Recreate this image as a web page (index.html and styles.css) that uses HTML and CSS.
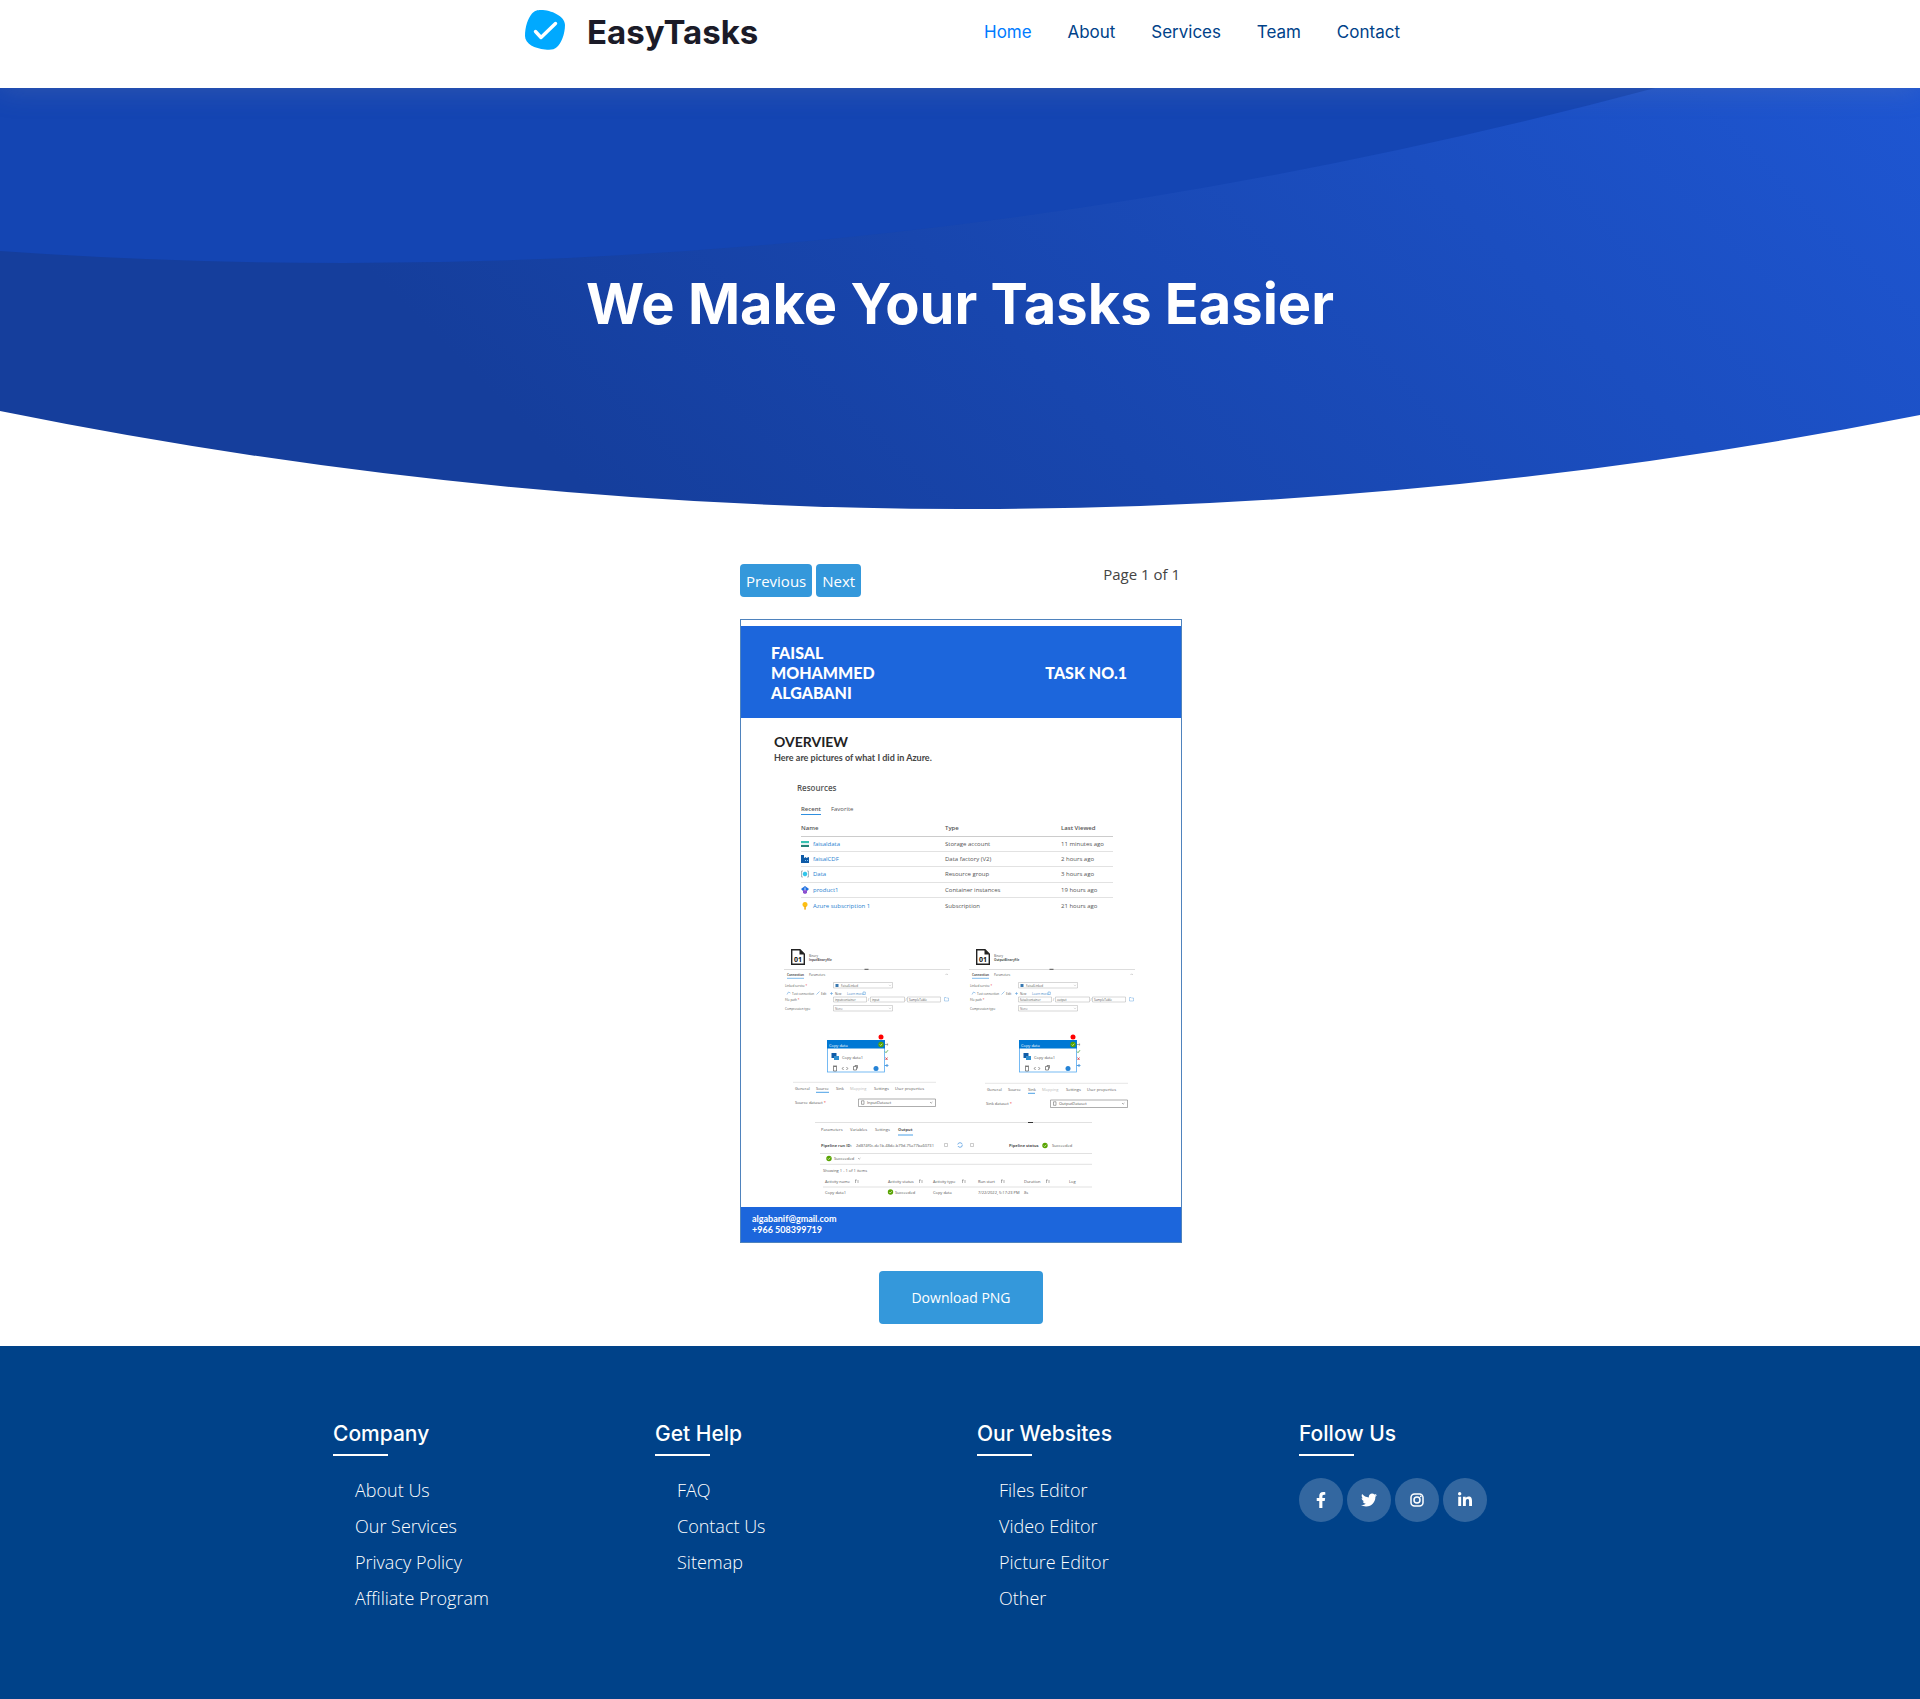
FILE: index.html
```html
<!DOCTYPE html>
<html lang="en">
<head>
<meta charset="utf-8">
<meta name="viewport" content="width=device-width, initial-scale=1">
<title>EasyTasks</title>
<link rel="stylesheet" href="styles.css">
</head>
<body>
<header class="site-header">
  <div class="header-inner">
    <a class="brand" href="#">
      <svg class="brand-mark" viewBox="0 0 40 40" aria-hidden="true">
        <path fill="#00a9ff" d="M16 0C26 0 40 6 40 15C40 24 36 34 32 37C29 40 25 40 20 39.500C10 38.500 0 34 0 26C0 17 3 8 7 3.500C10 .5 12 0 16 0Z"/>
        <path fill="none" stroke="#fff" stroke-width="3.400" stroke-linecap="round" stroke-linejoin="round" d="M10.500 21.500L16 27.500L30.500 13.500"/>
      </svg>
      <span class="brand-name">EasyTasks</span>
    </a>
    <nav class="main-nav" aria-label="Main">
      <a class="nav-link is-active" href="#">Home</a>
      <a class="nav-link" href="#">About</a>
      <a class="nav-link" href="#">Services</a>
      <a class="nav-link" href="#">Team</a>
      <a class="nav-link" href="#">Contact</a>
    </nav>
  </div>
</header>

<section class="hero">
  <svg class="hero-shape" viewBox="0 0 1920 421" preserveAspectRatio="none" aria-hidden="true">
    <defs>
      <linearGradient id="hero-fill" gradientUnits="userSpaceOnUse" x1="480" y1="295" x2="1348" y2="-573">
        <stop offset="0" stop-color="#153e9c"/>
        <stop offset="1" stop-color="#1e56d2"/>
      </linearGradient>
    </defs>
    <path fill="url(#hero-fill)" d="M0 0H1920V327Q960 517 0 323Z"/>
    <path fill="#1445b3" d="M0 0H1655Q827 221 0 163Z"/>
  </svg>
  <h1 class="hero-title">We Make Your Tasks Easier</h1>
</section>

<main class="viewer">
  <div class="viewer-bar">
    <div class="pager">
      <button class="btn btn-small" type="button">Previous</button>
      <button class="btn btn-small" type="button">Next</button>
    </div>
    <span class="page-count">Page 1 of 1</span>
  </div>

  <article class="doc">
    <header class="doc-head">
      <p class="doc-name">FAISAL<br>MOHAMMED<br>ALGABANI</p>
      <p class="doc-task">TASK NO.1</p>
    </header>
    <section class="doc-overview">
      <h2 class="doc-title">OVERVIEW</h2>
      <p class="doc-lead">Here are pictures of what I did in Azure.</p>
    </section>
    <section class="resources">
      <h3 class="res-title">Resources</h3>
      <div class="res-tabs"><span class="res-tab is-current">Recent</span><span class="res-tab">Favorite</span></div>
      <table class="res-table">
        <thead><tr><th class="col-name">Name</th><th class="col-type">Type</th><th>Last Viewed</th></tr></thead>
        <tbody>
          <tr><td><span class="res-item"><svg class="res-icon" viewBox="0 0 8 8"><path fill="#37c2b1" d="M0 1h8v2H0z"/><path fill="#dff3f0" d="M0 3h8v2H0z"/><path fill="#258277" d="M0 5h8v2H0z"/></svg><a href="#">faisaldata</a></span></td><td>Storage account</td><td>11 minutes ago</td></tr>
          <tr><td><span class="res-item"><svg class="res-icon" viewBox="0 0 8 8"><path fill="#0f5ba7" d="M0 0h3v3l2-1v1l3-1v6H0z"/><path fill="#7cc0f4" d="M4 5h1v1H4zM6 5h1v1H6z"/></svg><a href="#">faisalCDF</a></span></td><td>Data factory (V2)</td><td>2 hours ago</td></tr>
          <tr><td><span class="res-item"><svg class="res-icon" viewBox="0 0 8 8"><path fill="none" stroke="#8a9aa6" stroke-width=".7" d="M2 1H.5v6H2M6 1h1.500v6H6"/><path fill="#32c5ea" d="M4 1.500l2.200 1.200v2.600L4 6.500 1.800 5.300V2.700z"/></svg><a href="#">Data</a></span></td><td>Resource group</td><td>3 hours ago</td></tr>
          <tr><td><span class="res-item"><svg class="res-icon" viewBox="0 0 8 8"><path fill="#1f6fe0" d="M4 0l4 3-2 2H2L0 3z"/><path fill="#8a4fd0" d="M2 4h4v3L4 8 2 7z"/><path fill="#fff" d="M3.600 1.500h.8v3h-.8z"/></svg><a href="#">product1</a></span></td><td>Container instances</td><td>19 hours ago</td></tr>
          <tr><td><span class="res-item"><svg class="res-icon" viewBox="0 0 8 8"><circle cx="4" cy="2.500" r="2.500" fill="#fdbf12"/><path fill="#f2a90b" d="M3.300 4h1.500v3.200L4 8l-.7-.8z"/></svg><a href="#">Azure subscription 1</a></span></td><td>Subscription</td><td>21 hours ago</td></tr>
        </tbody>
      </table>
    </section>

    <!-- Azure Data Factory screens: datasets, copy activities, pipeline output -->
    <svg class="doc-screens" viewBox="741 920 440 287" role="img" aria-label="Azure Data Factory screens">
      <defs>
        <g id="dataset">
          <path fill="#fff" stroke="#222" stroke-width="1.400" d="M791.700 949.700h8.300l4.300 4.300v10.300h-12.600z"/>
          <path fill="#222" d="M799.500 949.500v5h5z"/>
          <text x="794" y="961.500" font-size="7" font-weight="700" fill="#111">01</text>
          <text x="809" y="956.500" font-size="3">Binary</text>
          <path stroke="#bbb" stroke-width=".5" d="M784 969.500h166"/>
          <path stroke="#555" stroke-width="1" d="M864.500 969.300h4"/>
          <text x="787" y="975.500" font-size="3" font-weight="700">Connection</text>
          <text x="809" y="975.500" font-size="3">Parameters</text>
          <path stroke="#4aa0e6" stroke-width=".7" d="M787 978.300h17"/>
          <path fill="none" stroke="#888" stroke-width=".4" d="M945.500 975l1.200-1.200 1.200 1.200"/>
          <text x="785" y="987" font-size="3">Linked service <tspan fill="#e33">*</tspan></text>
          <text x="792" y="995" font-size="3">Test connection</text>
          <text x="821" y="995" font-size="3">Edit</text>
          <text x="835" y="995" font-size="3">New</text>
          <text x="847" y="995" font-size="3" fill="#3d7fc4">Learn more</text>
          <path fill="none" stroke="#4a94d8" stroke-width=".5" d="M787 994.500l1.500-2.500 2 1M816.500 994.500l3-3M830 993.500h3M831.500 992v3M863 992h2.300v2.500h-2.300z"/>
          <text x="785" y="1000.500" font-size="3">File path <tspan fill="#e33">*</tspan></text>
          <text x="785" y="1009.500" font-size="3">Compression type</text>
          <g fill="none" stroke="#999" stroke-width=".4">
            <path d="M833.500 982.500h59v5.500h-59zM833.500 1005.500h59v5.500h-59zM833.500 997h33v5h-33zM870.500 997h34v5h-34zM907.500 997h33v5h-33zM889 984.800l1 1 1-1M889 1007.800l1 1 1-1"/>
            <path stroke="#4a94d8" d="M944.500 997.500h1.500l.5.500h2v3h-4z"/>
          </g>
          <path fill="#3878b0" d="M835.500 984h3v3h-3z"/>
          <text x="868" y="1001" font-size="3">/</text>
          <text x="905.500" y="1001" font-size="3">/</text>
          <text x="835" y="1009.500" font-size="3" fill="#777">None</text>
        </g>
        <g id="tick">
          <circle r="2.700" fill="#57a300"/>
          <path fill="none" stroke="#fff" stroke-width=".6" d="M-1.200 0l.9 1L1.300-.8"/>
        </g>
        <g id="activity">
          <rect x="827.500" y="1040.500" width="57" height="31.500" fill="#fff" stroke="#55aaf0" stroke-width=".8"/>
          <path fill="#0078d4" d="M827 1040h58v8.500h-58z"/>
          <text x="829" y="1046.500" font-size="4" fill="#fff">Copy data</text>
          <text x="842" y="1058.500" font-size="4">Copy data1</text>
          <circle cx="881" cy="1037" r="2.500" fill="#f00"/>
          <use href="#tick" x="881" y="1044.500"/>
          <path fill="#0f5ba7" d="M831.500 1053h5v5h-5z"/>
          <path fill="#2f8fd0" d="M834 1056h5v4h-5z"/>
          <path fill="none" stroke="#444" stroke-width=".6" d="M833.500 1066.500h3v4.500h-3zM833 1066h4M843.500 1067l-1.200 1.500 1.200 1.500M846.500 1067l1.200 1.500-1.200 1.500M853.500 1066.500h3v3.500h-3zM855 1066v-.5h2.500v3"/>
          <circle cx="876" cy="1068.500" r="2.500" fill="#2583d6"/>
          <path fill="none" stroke="#888" stroke-width=".7" d="M885 1044.500h3M886.800 1043.300l1.300 1.200-1.300 1.200"/>
          <path fill="none" stroke="#4aa23c" stroke-width=".8" d="M885 1051.500l1 1.200 2-2.500"/>
          <path fill="none" stroke="#d0343c" stroke-width=".8" d="M885.500 1057.500l2 2.500M887.500 1057.500l-2 2.500"/>
          <path fill="none" stroke="#2583d6" stroke-width=".8" d="M884.800 1065.500h3M886.500 1064l1.500 1.500-1.500 1.500"/>
        </g>
        <g id="activity-tabs" font-size="4">
          <path stroke="#ccc" stroke-width=".5" d="M793 1082.300h143"/>
          <text x="795" y="1090">General</text>
          <text x="816" y="1090">Source</text>
          <text x="836" y="1090">Sink</text>
          <text x="850" y="1090" fill="#bbb">Mapping</text>
          <text x="874" y="1090">Settings</text>
          <text x="895" y="1090">User properties</text>
          <path fill="#fff" stroke="#777" stroke-width=".6" d="M858.500 1099h77v7.500h-77z"/>
          <path fill="none" stroke="#555" stroke-width=".5" d="M861.500 1100.800h2.500v3.500h-2.500zM930 1102l1.200 1.200 1.200-1.200"/>
        </g>
      </defs>

      <use href="#dataset"/>
      <g font-size="3">
        <text x="809" y="961" font-weight="700">InputBinaryfile</text>
        <text x="841" y="986.500">FaisalLinked</text>
        <text x="835" y="1000.500">inputcontainer</text>
        <text x="872" y="1000.500">input</text>
        <text x="909" y="1000.500">SampleTable</text>
      </g>
      <use href="#dataset" x="185"/>
      <g font-size="3">
        <text x="994" y="961" font-weight="700">OutputBinaryfile</text>
        <text x="1026" y="986.500">FaisalLinked</text>
        <text x="1020" y="1000.500">faisalcontainer</text>
        <text x="1057" y="1000.500">output</text>
        <text x="1094" y="1000.500">SampleTable</text>
      </g>

      <use href="#activity"/>
      <use href="#activity" x="192"/>

      <use href="#activity-tabs"/>
      <path stroke="#4aa0e6" d="M816 1092.300h13M1028 1093.300h7"/>
      <use href="#activity-tabs" x="192" y="1"/>
      <g font-size="4">
        <text x="795" y="1103.500">Source dataset <tspan fill="#e33">*</tspan></text>
        <text x="867" y="1104">InputDataset</text>
        <text x="986" y="1104.500">Sink dataset <tspan fill="#e33">*</tspan></text>
        <text x="1059" y="1105">OutputDataset</text>
      </g>

      <g font-size="4">
        <path stroke="#ccc" stroke-width=".6" d="M815 1122.500h277M820 1153.500h272M820 1164.300h272M823 1187h269"/>
        <path stroke="#333" stroke-width="1" d="M1028 1122.500h5"/>
        <text x="821" y="1131">Parameters</text>
        <text x="850" y="1131">Variables</text>
        <text x="875" y="1131">Settings</text>
        <text x="898" y="1131" font-weight="700">Output</text>
        <path stroke="#4aa0e6" d="M898 1135h15"/>
        <text x="821" y="1147" font-weight="700">Pipeline run ID:</text>
        <text x="856" y="1147">2d874f0c-de1b-48de-b79d-75a77ba60731</text>
        <path fill="none" stroke="#999" stroke-width=".5" d="M944.500 1143.500h3v3h-3zM970.500 1143.500h3v3h-3z"/>
        <circle cx="960" cy="1145" r="2.300" fill="none" stroke="#3f8fdc" stroke-width=".7" stroke-dasharray="5.500 1.500"/>
        <text x="1009" y="1147" font-weight="700">Pipeline status</text>
        <use href="#tick" x="1045" y="1145.500"/>
        <text x="1052" y="1147">Succeeded</text>
        <use href="#tick" x="829" y="1158.500"/>
        <text x="834" y="1160">Succeeded</text>
        <path fill="none" stroke="#777" stroke-width=".5" d="M858 1158l1.200 1.200 1.200-1.200"/>
        <text x="823" y="1171.500">Showing 1 - 1 of 1 items</text>
        <text x="825" y="1182.500">Activity name</text>
        <text x="888" y="1182.500">Activity status</text>
        <text x="933" y="1182.500">Activity type</text>
        <text x="978" y="1182.500">Run start</text>
        <text x="1024" y="1182.500">Duration</text>
        <text x="1069" y="1182.500">Log</text>
        <path fill="none" stroke="#666" stroke-width=".5" d="M855.500 1180v3M855 1180h2M858 1180v3M919.500 1180v3M919 1180h2M922 1180v3M962.500 1180v3M962 1180h2M965 1180v3M1001.500 1180v3M1001 1180h2M1004 1180v3M1046.500 1180v3M1046 1180h2M1049 1180v3"/>
        <text x="825" y="1193.500">Copy data1</text>
        <use href="#tick" x="890.500" y="1192"/>
        <text x="895" y="1193.500">Succeeded</text>
        <text x="933" y="1193.500">Copy data</text>
        <text x="978" y="1193.500">7/22/2022, 5:17:23 PM</text>
        <text x="1024" y="1193.500">8s</text>
      </g>
    </svg>

    <footer class="doc-foot">
      <p>algabanif@gmail.com</p>
      <p>+966 508399719</p>
    </footer>
  </article>

  <button class="btn btn-large" type="button">Download PNG</button>
</main>

<footer class="site-footer">
  <div class="footer-cols">
    <section class="footer-col">
      <h2 class="footer-title">Company</h2>
      <ul class="footer-links">
        <li><a href="#">About Us</a></li>
        <li><a href="#">Our Services</a></li>
        <li><a href="#">Privacy Policy</a></li>
        <li><a href="#">Affiliate Program</a></li>
      </ul>
    </section>
    <section class="footer-col">
      <h2 class="footer-title">Get Help</h2>
      <ul class="footer-links">
        <li><a href="#">FAQ</a></li>
        <li><a href="#">Contact Us</a></li>
        <li><a href="#">Sitemap</a></li>
      </ul>
    </section>
    <section class="footer-col">
      <h2 class="footer-title">Our Websites</h2>
      <ul class="footer-links">
        <li><a href="#">Files Editor</a></li>
        <li><a href="#">Video Editor</a></li>
        <li><a href="#">Picture Editor</a></li>
        <li><a href="#">Other</a></li>
      </ul>
    </section>
    <section class="footer-col">
      <h2 class="footer-title">Follow Us</h2>
      <div class="socials">
        <a class="social" href="#" aria-label="Facebook"><svg viewBox="0 0 320 512"><path d="M279.140 288l14.220-92.660h-88.910v-60.130c0-25.350 12.420-50.060 52.240-50.060h40.420V6.260S260.430 0 225.360 0c-73.220 0-121.080 44.380-121.080 124.720v70.620H22.890V288h81.390v224h100.170V288z"/></svg></a>
        <a class="social" href="#" aria-label="Twitter"><svg viewBox="0 0 512 512"><path d="M459.370 151.716c.325 4.548.325 9.097.325 13.645 0 138.720-105.583 298.558-298.558 298.558-59.452 0-114.680-17.219-161.137-47.106 8.447.974 16.568 1.299 25.340 1.299 49.055 0 94.213-16.568 130.274-44.832-46.132-.975-84.792-31.188-98.112-72.772 6.498.974 12.995 1.624 19.818 1.624 9.421 0 18.843-1.300 27.614-3.573-48.081-9.747-84.143-51.980-84.143-102.985v-1.299c13.969 7.797 30.214 12.670 47.431 13.319-28.264-18.843-46.781-51.005-46.781-87.391 0-19.492 5.197-37.360 14.294-52.954 51.655 63.675 129.300 105.258 216.365 109.807-1.624-7.797-2.599-15.918-2.599-24.040 0-57.828 46.782-104.934 104.934-104.934 30.213 0 57.502 12.670 76.670 33.137 23.715-4.548 46.456-13.320 66.599-25.340-7.798 24.366-24.366 44.833-46.132 57.827 21.117-2.273 41.584-8.122 60.426-16.243-14.292 20.791-32.161 39.308-52.628 54.253z"/></svg></a>
        <a class="social" href="#" aria-label="Instagram"><svg viewBox="0 0 16 16"><rect x="2" y="2" width="12" height="12" rx="3.500" fill="none" stroke="#fff" stroke-width="1.500"/><circle cx="8" cy="8" r="3" fill="none" stroke="#fff" stroke-width="1.500"/><circle cx="11.700" cy="4.300" r=".9"/></svg></a>
        <a class="social" href="#" aria-label="LinkedIn"><svg class="icon-linkedin" viewBox="0 0 448 512"><path d="M100.280 448H7.400V148.900h92.880zM53.790 108.100C24.090 108.100 0 83.500 0 53.800a53.790 53.790 0 0 1 107.580 0c0 29.700-24.100 54.300-53.790 54.300zM447.900 448h-92.680V302.400c0-34.700-.7-79.200-48.290-79.200-48.290 0-55.690 37.700-55.690 76.700V448h-92.780V148.900h89.080v40.800h1.300c12.400-23.500 42.690-48.300 87.880-48.300 94 0 111.280 61.900 111.280 142.300V448z"/></svg></a>
      </div>
    </section>
  </div>
</footer>
</body>
</html>
```
FILE: styles.css
```css
* { box-sizing: border-box; }

body {
  margin: 0;
  min-height: 100vh;
  display: flex;
  flex-direction: column;
  background: #fff;
  color: #444;
  font-family: "Open Sans", sans-serif;
}

h1, h2, h3, p, ul { margin: 0; padding: 0; }
a { text-decoration: none; }

/* Header */
.site-header {
  position: relative;
  z-index: 1;
  padding: 10px 16px 38px;
  background: #fff;
  box-shadow: 0 0 30px rgba(127, 137, 161, 0.3);
}
.header-inner {
  display: flex;
  justify-content: space-between;
  align-items: center;
  max-width: 880px;
  height: 40px;
  margin: 0 auto;
  padding-left: 5px;
}
.brand { display: flex; align-items: center; gap: 22px; }
.brand-mark { width: 40px; height: 40px; }
.brand-name {
  padding-top: 4px;
  color: #1b1b28;
  font: 700 33px/40px Inter, sans-serif;
}
.main-nav {
  display: flex;
  justify-content: space-between;
  width: 416px;
  padding-top: 4px;
}
.nav-link { color: #004289; font: 400 17px/24px Inter, sans-serif; }
.nav-link.is-active { color: #007bff; }

/* Hero */
.hero { display: grid; }
.hero-shape { grid-area: 1 / 1; display: block; width: 100%; height: 421px; }
.hero-title {
  grid-area: 1 / 1;
  padding: 184px 16px 0;
  color: #fff;
  font: 700 56px/64px Inter, sans-serif;
  text-align: center;
}

/* Viewer */
.viewer {
  display: flex;
  flex-direction: column;
  align-items: center;
  padding: 55px 16px 22px 18px;
}
.viewer-bar {
  display: flex;
  justify-content: space-between;
  width: 100%;
  max-width: 442px;
  margin-bottom: 22px;
}
.pager { display: flex; gap: 4px; }
.page-count { padding-right: 2px; font-size: 15px; line-height: 20px; }
.btn {
  border: 0;
  border-radius: 4px;
  background: #3498db;
  color: #fff;
  font-family: "Open Sans", sans-serif;
  font-weight: 500;
}
.btn-small { height: 33px; padding: 0 6px; font-size: 15px; }
.btn-large { height: 53px; padding: 0 32px; font-size: 14px; }

/* Document page */
.doc {
  width: 100%;
  max-width: 442px;
  margin-bottom: 28px;
  padding-top: 6px;
  border: 1px solid #4f83bd;
  background: #fff;
}
.doc-head {
  display: flex;
  justify-content: space-between;
  align-items: center;
  height: 92px;
  padding: 2px 54px 0 30px;
  background: #1c66dc;
  color: #fff;
  font: 900 16px/20px Lato, sans-serif;
}
.doc-overview { padding: 14px 33px 0; color: #222; font-family: Lato, sans-serif; }
.doc-title { font-size: 14px; line-height: 20px; font-weight: 700; }
.doc-lead { font-size: 9px; line-height: 12px; font-weight: 700; color: #444; }
.resources { padding: 18px 68px 7px 60px; color: #555; font-size: 6px; }
.res-title { margin-left: -4px; font-size: 8px; line-height: 12px; font-weight: 600; }
.res-tabs { display: flex; gap: 10px; margin: 11px 0 6px; line-height: 8px; }
.res-tab { padding-bottom: 1px; }
.res-tab.is-current { border-bottom: 1px solid #2f8fe0; font-weight: 600; }
.res-table { width: 100%; height: 92px; border-collapse: collapse; table-layout: fixed; line-height: 8px; }
.res-table th, .res-table td { height: 15px; padding: 0; border-bottom: 1px solid #e2e2e2; text-align: left; font-weight: 400; }
.res-table th { border-color: #ccc; font-weight: 600; }
.res-table tr:last-child td { border-bottom: 0; }
.res-table .col-name { width: 144px; }
.res-table .col-type { width: 116px; }
.res-item { display: flex; align-items: center; gap: 4px; }
.res-item a { color: #2a7fd0; }
.res-icon { width: 8px; height: 8px; }
.doc-screens { display: block; width: 100%; fill: #555; font-family: "Open Sans", sans-serif; }
.doc-foot {
  height: 35px;
  padding: 6px 11px;
  background: #1c66dc;
  color: #fff;
  font: 700 9px/11px Lato, sans-serif;
}

/* Footer */
.site-footer { flex: 1; padding: 74px 0 76px; background: #004289; color: #fff; }
.footer-cols {
  display: grid;
  grid-template-columns: repeat(4, 1fr);
  max-width: 1288px;
  margin: 0 auto;
}
.footer-col { padding: 0 17px; }
.footer-title {
  margin-bottom: 22px;
  font: 500 21px/28px Inter, sans-serif;
}
.footer-title::after {
  content: "";
  display: block;
  width: 55px;
  height: 2px;
  margin-top: 6px;
  background: #fff;
}
.footer-links {
  display: grid;
  gap: 12px;
  padding-left: 22px;
  list-style: none;
}
.footer-links a {
  display: block;
  color: #fff;
  font-size: 18px;
  font-weight: 300;
  line-height: 24px;
}
.socials { display: flex; gap: 4px; }
.social {
  display: flex;
  align-items: center;
  justify-content: center;
  width: 44px;
  height: 44px;
  border-radius: 50%;
  background: rgba(255, 255, 255, 0.2);
}
.social svg { height: 16px; fill: #fff; }

@media (max-width: 900px) {
  .header-inner { flex-wrap: wrap; height: auto; }
  .footer-cols { grid-template-columns: repeat(2, 1fr); gap: 32px 0; }
}
```
